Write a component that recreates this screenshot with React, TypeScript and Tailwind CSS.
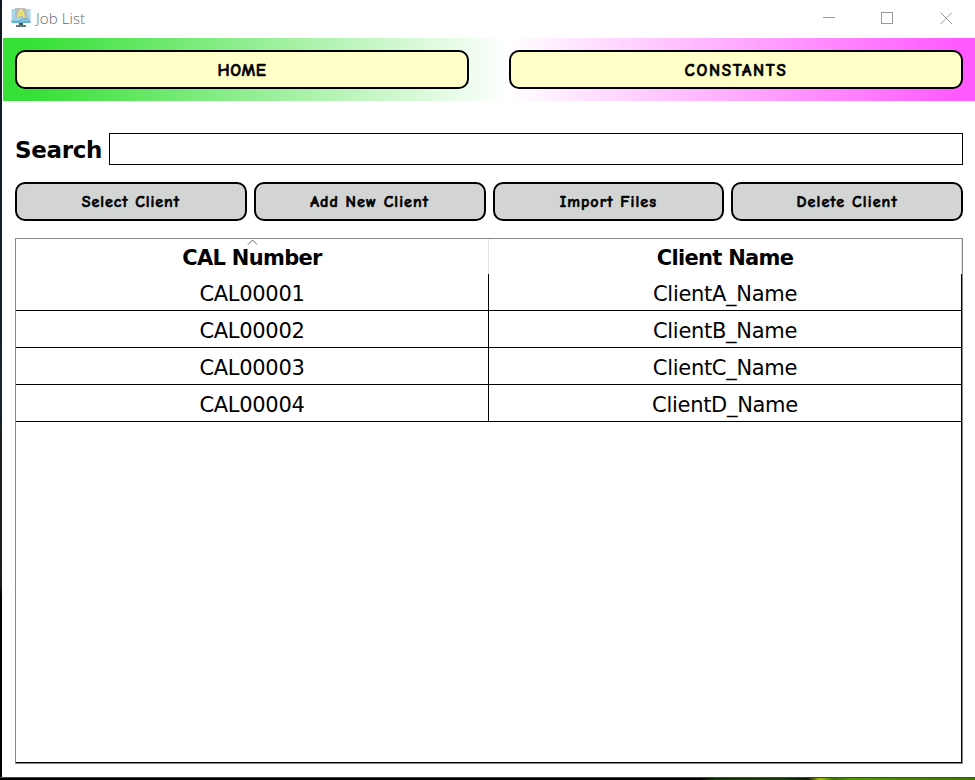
import React from "react";

const comic = "font-['Comic_Sans_MS','Comic_Neue','Lato',sans-serif] font-black text-black [-webkit-text-stroke:0.6px_#000]";

type Label = { text: string; className: string };

const navButtons: Label[] = [
  { text: "HOME", className: "tracking-[0.7px]" },
  { text: "CONSTANTS", className: "tracking-[1.7px]" },
];

const actions: Label[] = [
  { text: "Select Client", className: "tracking-[0.95px]" },
  { text: "Add New Client", className: "tracking-[1.05px]" },
  { text: "Import Files", className: "tracking-[1.05px]" },
  { text: "Delete Client", className: "tracking-[1.1px]" },
];

const rows = [
  ["CAL00001", "ClientA_Name"],
  ["CAL00002", "ClientB_Name"],
  ["CAL00003", "ClientC_Name"],
  ["CAL00004", "ClientD_Name"],
];

function AppIcon() {
  return (
    <svg width="20" height="20" viewBox="0 0 20 20" className="block">
      <rect x="0.5" y="1" width="19" height="13.5" rx="1" fill="#a9d8ea" />
      <rect x="0.5" y="12.5" width="19" height="2.5" fill="#65b3d3" />
      <path d="M4 0h10l2 2v8H4z" fill="#b9bdb9" />
      <path d="M13 10h5v2H6z" fill="#8fb5c2" />
      <path d="M6.800 9 9.400 2.200h1.200L13.200 9M8 6.800h4" fill="none" stroke="#f3e968" strokeWidth="1.8" />
      <path d="M8 15h4v2.500H8z" fill="#405660" />
      <path d="M5 17h10v2H5z" fill="#63767c" />
    </svg>
  );
}

function TitleBar() {
  return (
    <header className="flex h-[38px] items-start bg-white pl-[9px]">
      <div className="pt-[8px]"><AppIcon /></div>
      <span className="ml-[5px] mt-[8px] font-['Segoe_UI','Open_Sans',sans-serif] text-[15px] font-light leading-[20px] tracking-[0.1px] text-[#666]">Job List</span>
      <svg width="130" height="14" viewBox="0 0 130 14" className="ml-auto mr-[22px] mt-[11px] block" fill="none" stroke="#999" shapeRendering="crispEdges">
        <path d="M0 6.5h12" />
        <rect x="58.5" y="1.5" width="11" height="11" />
        <path d="m117.500 1.500 11.500 11.500M129 1.500l-11.500 11.500" shapeRendering="auto" />
      </svg>
    </header>
  );
}

export default function App() {
  return (
    <div className="flex h-[780px] w-[975px] flex-col overflow-hidden bg-white">
      <div className="flex min-h-0 flex-1">
        <div className="w-[2px] bg-[linear-gradient(#111820,#18232b_50%,#211a18_75%,#000_77%)]" />
        <main className="flex w-[973px] flex-col">
          <TitleBar />
          <nav className="ml-px flex h-[63px] gap-10 bg-[linear-gradient(90deg,#36e036_0%,#36e036_3%,#ffffff_52%,#ff5aff_98%)] px-3 pt-3">
            {navButtons.map((b) => (
              <button key={b.text} className={`h-[39px] flex-1 rounded-[10px] border-2 border-black bg-[#ffffc8] pt-[2px] text-[17px] leading-[33px] ${comic} ${b.className}`}>
                {b.text}
              </button>
            ))}
          </nav>
          <div className="flex flex-1 flex-col pl-[13px] pr-3">
            <label className="mt-8 flex h-8 items-center">
              <span className="w-[94px] pt-[2px] font-['Verdana','DejaVu_Sans',sans-serif] text-[23px] font-bold leading-[32px] tracking-[-0.35px] text-black">Search</span>
              <input className="h-8 w-[854px] border border-black bg-white outline-none" />
            </label>
            <div className="mt-[17px] flex gap-[7px]">
              {actions.map((a) => (
                <button key={a.text} className={`h-[39px] flex-1 rounded-[10px] border-2 border-black bg-[#d3d5d4] pt-[2px] text-[16px] leading-[33px] ${comic} ${a.className}`}>
                  {a.text}
                </button>
              ))}
            </div>
            <section className="mt-[17px] flex h-[526px] flex-col border border-[#828790] font-['Verdana','DejaVu_Sans',sans-serif] text-[21px] text-black">
              <div className="flex h-[35px] text-center font-bold leading-[38px] tracking-[-0.7px]">
                <div className="relative w-[473px] border-r border-[#e2e2e2]">
                  CAL Number
                  <svg width="11" height="6" viewBox="0 0 11 6" className="absolute left-[231px] top-0" fill="none" stroke="#666">
                    <path d="m1 5.500 4.500-4.500L10 5.500" />
                  </svg>
                </div>
                <div className="w-[473px] border-r border-[#e2e2e2]">Client Name</div>
              </div>
              <div className="flex-1 border-b border-r border-black tracking-[-0.3px]">
                {rows.map(([id, name]) => (
                  <div key={id} className="flex h-[37px] border-b border-black text-center leading-[40px]">
                    <div className="w-[473px] border-r border-black">{id}</div>
                    <div className="w-[472px]">{name}</div>
                  </div>
                ))}
              </div>
            </section>
          </div>
        </main>
      </div>
      <footer className="h-[3px] border-t border-[#444] bg-[linear-gradient(90deg,#000_0,#000_700px,#123006_715px,#183a0a_780px,#0a1605_808px,#a3c60b_820px,#3b700b_834px,#4f9908_850px,#3f7409_975px)]" />
    </div>
  );
}
